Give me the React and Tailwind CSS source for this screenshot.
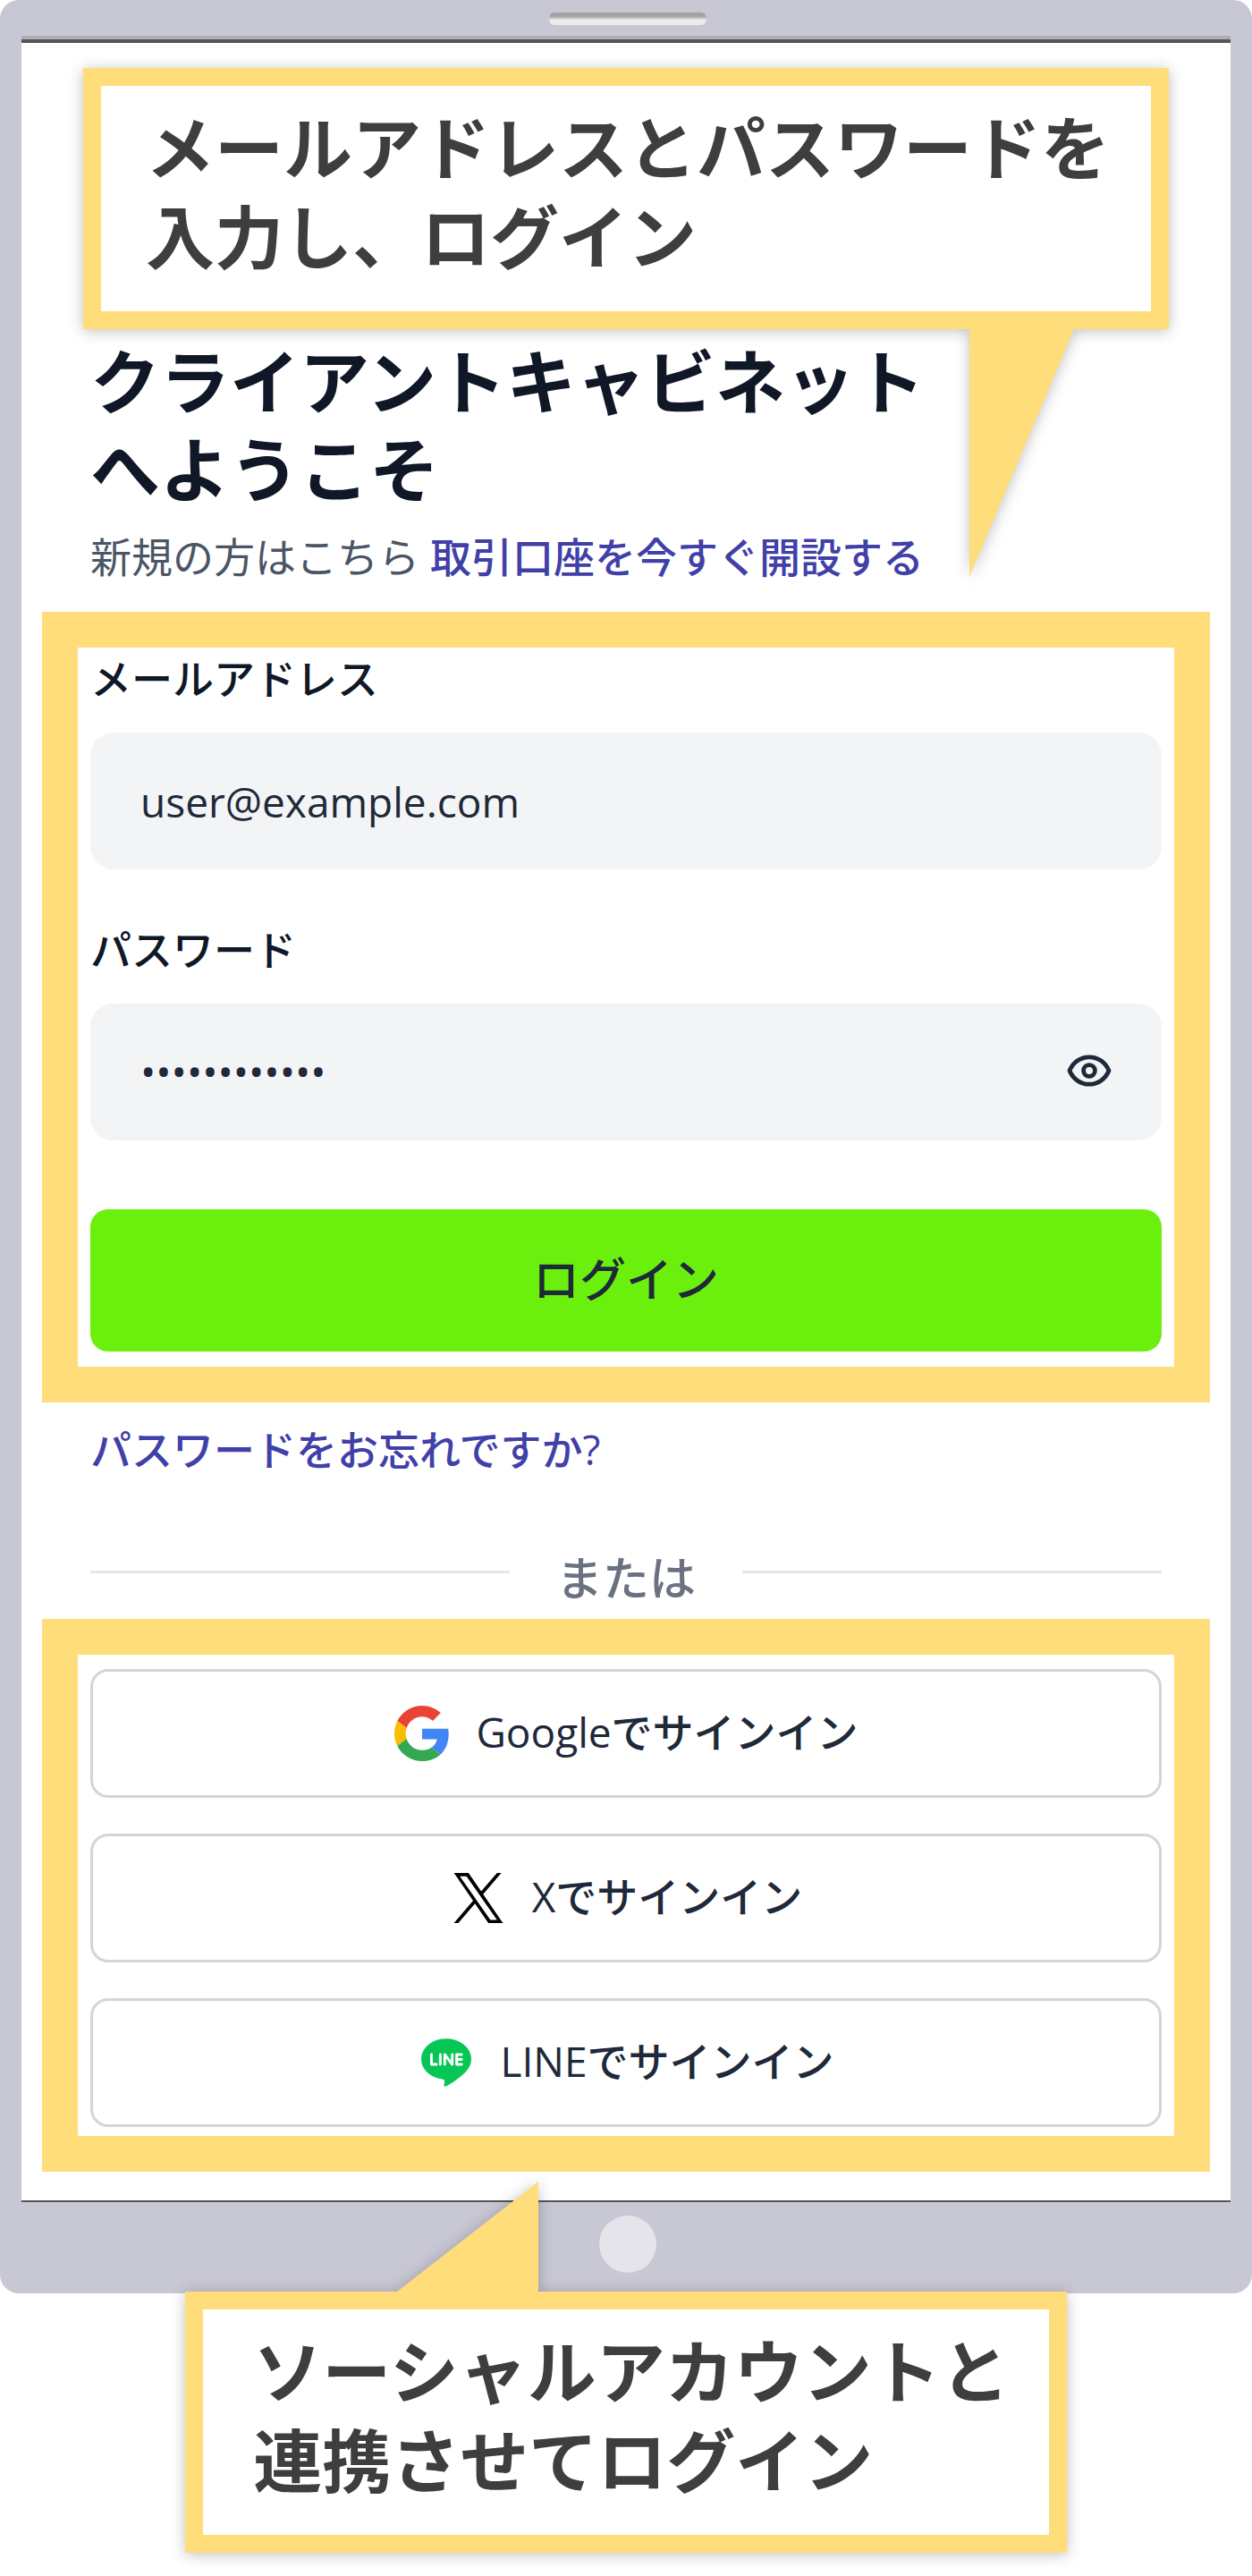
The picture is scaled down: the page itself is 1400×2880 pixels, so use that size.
import React, { useState } from "react";
import { SiLine } from "react-icons/si";

const GoogleLogo = () => (
  <svg viewBox="0 0 48 48" className="size-16 p-px" aria-hidden="true">
    <path fill="#EA4335" d="M24 9.5c3.54 0 6.71 1.22 9.21 3.6l6.85-6.85C35.9 2.38 30.47 0 24 0 14.62 0 6.51 5.38 2.56 13.22l7.98 6.19C12.43 13.72 17.74 9.5 24 9.5z" />
    <path fill="#4285F4" d="M46.98 24.55c0-1.57-.15-3.09-.38-4.55H24v9.02h12.94c-.58 2.96-2.26 5.48-4.78 7.18l7.73 6c4.51-4.18 7.09-10.36 7.09-17.65z" />
    <path fill="#FBBC05" d="M10.53 28.59c-.48-1.45-.76-2.99-.76-4.59s.27-3.14.76-4.59l-7.98-6.19C.92 16.46 0 20.12 0 24c0 3.88.92 7.54 2.56 10.78l7.97-6.19z" />
    <path fill="#34A853" d="M24 48c6.48 0 11.93-2.13 15.89-5.81l-7.73-6c-2.15 1.45-4.92 2.3-8.16 2.3-6.26 0-11.57-4.22-13.47-9.91l-7.98 6.19C6.51 42.62 14.62 48 24 48z" />
  </svg>
);

const XLogo = () => (
  <svg viewBox="0 0 1200 1227" className="h-14 w-16" fill="#000" aria-hidden="true">
    <path d="M714.163 519.284L1160.89 0H1055.03L667.137 450.887L357.328 0H0L468.492 681.821L0 1226.37H105.866L515.491 750.218L842.672 1226.37H1200L714.137 519.284H714.163ZM569.165 687.828L521.697 619.934L144.011 79.6944H306.615L611.412 515.685L658.88 583.579L1055.08 1150.3H892.476L569.165 687.854V687.828Z" />
  </svg>
);

const LineLogo = () => (
  <span className="flex size-16 items-center justify-center">
    <SiLine className="size-14 text-[#06c755]" aria-hidden="true" />
  </span>
);

const EyeIcon = () => (
  <svg viewBox="0 0 50 36" className="h-9 w-[50px]" fill="none" stroke="currentColor" strokeWidth="4.8" aria-hidden="true">
    <path d="M3 18C7 8.5 15.5 2.8 25 2.8S43 8.5 47 18C43 27.5 34.5 33.2 25 33.2S7 27.5 3 18z" strokeLinejoin="round" />
    <circle cx="25" cy="18" r="6.4" />
  </svg>
);

const socials = [
  { id: "google", label: "Googleでサインイン", Logo: GoogleLogo },
  { id: "x", label: "Xでサインイン", Logo: XLogo },
  { id: "line", label: "LINEでサインイン", Logo: LineLogo },
];

const Callout = ({ className, children }) => (
  <div
    className={`relative z-10 mx-auto w-fit border-20 border-[#ffdd7b] bg-white pt-5 pb-8 text-[77px] leading-[100px] font-bold text-[#3e3e3e] drop-shadow-[0_2px_8px_rgba(0,0,0,0.25)] ${className}`}
  >
    {children}
  </div>
);

const App = () => {
  const [email, setEmail] = useState("user@example.com");
  const [password, setPassword] = useState("password1234");
  const [visible, setVisible] = useState(false);

  return (
    <div className="bg-white pb-6 font-['Open_Sans','Noto_Sans_CJK_JP',sans-serif] text-[46px] leading-16 text-gray-800">
      <div className="rounded-[21px] bg-[#c8c7d4] px-6">
        {/* Speaker */}
        <div className="flex h-10 items-start justify-center pt-3.5 pl-1">
          <div className="h-3.5 w-44 rounded-md bg-linear-to-b from-[#a2a2a2] from-30% to-[#ebebeb] to-60%" />
        </div>

        <main className="border-t-4 border-b-2 border-t-[#aeaeb0] border-b-[#555558] bg-white pb-8">
          <div className="h-1 bg-[#555558]" />

          <Callout className="mt-7 pr-[46px] pl-[50px]">
            <p>
              メールアドレスとパスワードを
              <br />
              入力し、ログイン
            </p>
            <svg viewBox="0 0 117 277" className="absolute top-[272px] right-[86px] h-[277px] w-[117px]" aria-hidden="true">
              <path d="M0 0H117L0 277z" fill="#ffdd7b" />
            </svg>
          </Callout>

          <div className="px-[77px]">
            <h1 className="mt-2.5 text-[78px] leading-[98px] font-bold text-gray-900">
              クライアントキャビネット
              <br />
              へようこそ
            </h1>
            <p className="mt-4 mb-[30px] text-gray-600">
              新規の方はこちら{" "}
              <a href="#register" className="font-medium text-[#413fa8]">取引口座を今すぐ開設する</a>
            </p>
          </div>

          <form
            className="mx-[23px] border-40 border-[#ffdd7b] px-3.5 pt-0.5 pb-[17px]"
            onSubmit={(e) => e.preventDefault()}
          >
            <label htmlFor="email" className="block font-medium text-gray-900">メールアドレス</label>
            <input
              id="email"
              type="email"
              value={email}
              onChange={(e) => setEmail(e.target.value)}
              className="mt-[29px] block h-[153px] w-full rounded-[26px] bg-gray-100 px-14 outline-none"
            />

            <label htmlFor="password" className="mt-[57px] block font-medium text-gray-900">パスワード</label>
            <div className="mt-[29px] flex h-[153px] items-center rounded-[26px] bg-gray-100 px-14 pb-1">
              <input
                id="password"
                type={visible ? "text" : "password"}
                value={password}
                onChange={(e) => setPassword(e.target.value)}
                className="min-w-0 flex-1 outline-none"
              />
              <button type="button" aria-label="パスワードを表示" onClick={() => setVisible(!visible)}>
                <EyeIcon />
              </button>
            </div>

            <button type="submit" className="mt-[77px] block h-[159px] w-full rounded-[20px] bg-[#6bf00d] pb-1 text-[52px] font-medium">
              ログイン
            </button>
          </form>

          <div className="px-[77px]">
            <a href="#forgot" className="mt-5 block w-fit font-medium text-[#413fa8]">パスワードをお忘れですか?</a>
            <div className="mt-[72px] mb-[6px] flex items-start gap-13 text-[52px] leading-20 font-medium text-gray-500">
              <div className="mt-8 h-[3px] flex-1 bg-gray-200" />
              または
              <div className="mt-8 h-[3px] flex-1 bg-gray-200" />
            </div>
          </div>

          <div className="mx-[23px] flex flex-col gap-10 border-40 border-[#ffdd7b] px-3.5 pt-4 pb-2.5">
            {socials.map(({ id, label, Logo }) => (
              <button
                key={id}
                type="button"
                className="flex h-36 items-center justify-center gap-7 rounded-[20px] border-3 border-gray-300 font-medium"
              >
                <Logo />
                <span className="pb-1">{label}</span>
              </button>
            ))}
          </div>
        </main>

        {/* Home button */}
        <div className="flex h-[102px] justify-center pt-[15px] pl-1">
          <div className="size-16 rounded-full bg-[#e4e4ea]" />
        </div>
      </div>

      <Callout className="-mt-0.5 pr-11 pl-14">
        <p>
          ソーシャルアカウントと
          <br />
          連携させてログイン
        </p>
        <svg viewBox="0 0 158 123" className="absolute bottom-[272px] left-[217px] h-[123px] w-[158px]" aria-hidden="true">
          <path d="M158 0V123H0z" fill="#ffdd7b" />
        </svg>
      </Callout>
    </div>
  );
};

export default App;
